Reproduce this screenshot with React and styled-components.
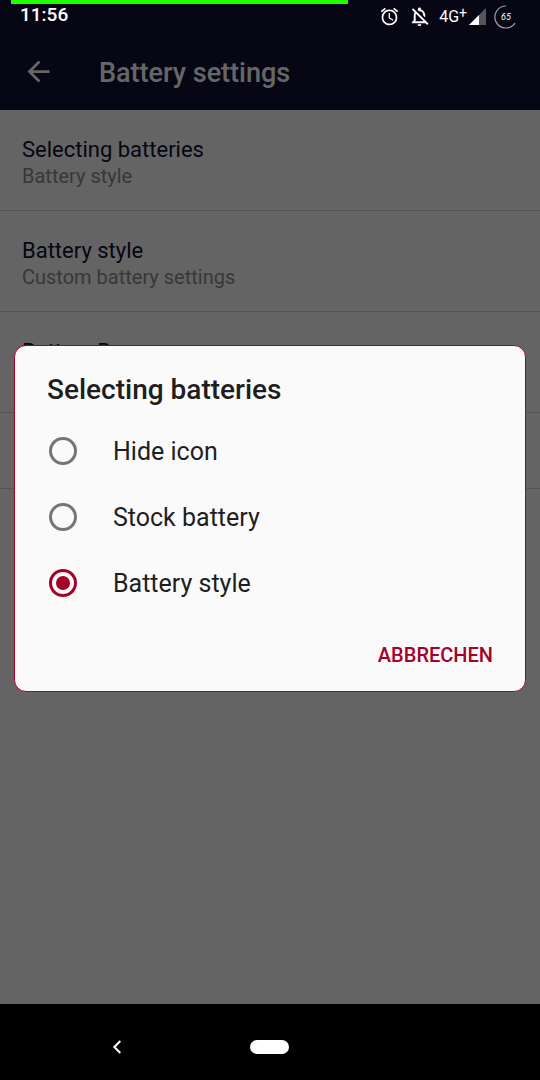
import React, { useState } from 'react'
import styled, { createGlobalStyle } from 'styled-components'
import { MdAlarm, MdArrowBack, MdOutlineNotificationsOff } from 'react-icons/md'

const settings = [
    { id: 1, title: 'Selecting batteries', summary: 'Battery style' },
    { id: 2, title: 'Battery style', summary: 'Custom battery settings' },
    { id: 3, title: 'Battery Bar' },
]

const options = ['Hide icon', 'Stock battery', 'Battery style']

const level = 65

export default function App() {
    const [selected, setSelected] = useState('Battery style')

    return (
        <>
            <GlobalStyle />
            <Screen>
                <StatusBar>
                    <BatteryBar><BatteryFill style={{ width: `${level}%` }} /></BatteryBar>
                    <Clock>11:56</Clock>
                    <StatusIcons>
                        <MdAlarm size={21} />
                        <MdOutlineNotificationsOff size={23} />
                        <Network>
                            <span>4G<Plus>+</Plus></span>
                            <svg width="17" height="17" viewBox="0 0 17 17">
                                <path d="M17 0v17H0z" fill="#55555a" />
                                <path d="M10 7v10H0z" fill="#fff" />
                            </svg>
                        </Network>
                        <BatteryCircle>
                            <svg width="24" height="24" viewBox="0 0 24 24">
                                <path d="M12 1A11 11 0 1 0 21 18.2" fill="none" stroke="#a0a0a6" strokeWidth="1.2" />
                            </svg>
                            <span>{level}</span>
                        </BatteryCircle>
                    </StatusIcons>
                </StatusBar>
                <Toolbar>
                    <BackButton aria-label="Back"><MdArrowBack size={33} /></BackButton>
                    <h1>Battery settings</h1>
                </Toolbar>
                <List>
                    {settings.map(item => (
                        <Item key={item.id}>
                            <h2>{item.title}</h2>
                            {item.summary && <p>{item.summary}</p>}
                        </Item>
                    ))}
                    <Item $short />
                </List>
                <Scrim>
                    <Dialog role="dialog" aria-labelledby="dialog-title">
                        <DialogTitle id="dialog-title">Selecting batteries</DialogTitle>
                        {options.map(name => (
                            <Option key={name}>
                                <Radio
                                    type="radio"
                                    name="battery"
                                    checked={selected === name}
                                    onChange={() => setSelected(name)}
                                />
                                <span>{name}</span>
                            </Option>
                        ))}
                        <Actions>
                            <TextButton>ABBRECHEN</TextButton>
                        </Actions>
                    </Dialog>
                </Scrim>
                <NavBar>
                    <NavButton aria-label="Navigate back">
                        <svg width="10" height="16" viewBox="0 0 10 16">
                            <path d="M8.3 2L2.3 8l6 6" fill="none" stroke="#fff" strokeWidth="2" />
                        </svg>
                    </NavButton>
                    <NavButton aria-label="Home"><Pill /></NavButton>
                </NavBar>
            </Screen>
        </>
    )
}

const GlobalStyle = createGlobalStyle`
    * {
        box-sizing: border-box;
    }
    body {
        margin: 0;
        background: #fafafa;
        font-family: Roboto, sans-serif;
    }
    h1, h2, p {
        margin: 0;
    }
    button {
        border: 0;
        padding: 0;
        background: none;
        color: inherit;
        font-family: inherit;
    }
    svg {
        display: block;
    }
`

const Screen = styled.div`
    min-height: 100vh;
    display: flex;
    flex-direction: column;
`

const StatusBar = styled.header`
    position: relative;
    z-index: 2;
    height: 33px;
    padding: 0 22px 0 20px;
    display: flex;
    justify-content: space-between;
    align-items: center;
    color: white;
    background: #060614;
`

const BatteryBar = styled.div`
    position: absolute;
    top: 0;
    left: 11px;
    right: 11px;
    height: 4px;
`

const BatteryFill = styled.div`
    height: 100%;
    background: #1eff00;
`

const Clock = styled.span`
    font-size: 19px;
    font-weight: 500;
    line-height: 20px;
    padding-bottom: 4px;
`

const StatusIcons = styled.div`
    display: flex;
    align-items: center;
    gap: 8px;
`

const Network = styled.div`
    display: flex;
    align-items: center;
    gap: 2px;
    font-size: 16px;
    line-height: 20px;
`

const Plus = styled.sup`
    font-size: 14px;
    line-height: 0;
    vertical-align: 4px;
`

const BatteryCircle = styled.div`
    display: grid;
    place-items: center;
    font-size: 9px;
    font-style: italic;
    svg, span {
        grid-area: 1 / 1;
    }
`

const Toolbar = styled.div`
    height: 77px;
    padding: 0 22px;
    display: flex;
    align-items: center;
    gap: 44px;
    color: white;
    background: #0f0f32;
    h1 {
        font-size: 27px;
        font-weight: 500;
        line-height: 32px;
        padding-top: 2px;
    }
`

const BackButton = styled.button`
    display: flex;
`

const List = styled.ul`
    flex: 1;
    margin: 0;
    padding: 0;
    list-style: none;
    background: #fafafa;
`

const Item = styled.li`
    height: ${props => props.$short ? '76px' : '101px'};
    padding: 26px 22px 19px;
    border-bottom: 1px solid #d2d2d2;
    h2 {
        color: #0f0f32;
        font-size: 22px;
        font-weight: 400;
        line-height: 27px;
    }
    p {
        color: #8c8c8c;
        font-size: 20px;
        line-height: 27px;
    }
`

const Scrim = styled.div`
    position: fixed;
    inset: 0;
    z-index: 1;
    padding: 33px 14px 76px;
    display: flex;
    align-items: center;
    background: rgba(0,0,0,0.6);
`

const Dialog = styled.section`
    flex: 1;
    border: 1px solid #a50028;
    border-radius: 12px;
    background: #fafafa;
    color: #1e1e1e;
`

const DialogTitle = styled.h2`
    padding: 28px 32px 12px;
    font-size: 28px;
    font-weight: 500;
    line-height: 32px;
`

const Option = styled.label`
    height: 66px;
    padding: 0 34px;
    display: flex;
    align-items: center;
    gap: 36px;
    font-size: 25px;
    line-height: 32px;
    span {
        padding-top: 2px;
    }
`

const Radio = styled.input`
    appearance: none;
    width: 28px;
    height: 28px;
    margin: 0;
    border: 3px solid #757575;
    border-radius: 50%;
    display: grid;
    place-items: center;
    &:checked {
        border-color: #a50028;
    }
    &:checked::before {
        content: '';
        width: 14px;
        height: 14px;
        border-radius: 50%;
        background: #a50028;
    }
`

const Actions = styled.div`
    padding: 15px 22px 12px;
    display: flex;
    justify-content: flex-end;
`

const TextButton = styled.button`
    height: 48px;
    padding: 0 10px;
    color: #a50028;
    font-size: 20px;
    font-weight: 500;
`

const NavBar = styled.nav`
    position: relative;
    z-index: 2;
    height: 76px;
    padding: 10px 41px 0;
    display: grid;
    grid-template-columns: repeat(3, 1fr);
    background: black;
`

const NavButton = styled.button`
    display: flex;
    align-items: center;
    justify-content: center;
`

const Pill = styled.span`
    width: 39px;
    height: 14px;
    border-radius: 7px;
    background: white;
`
